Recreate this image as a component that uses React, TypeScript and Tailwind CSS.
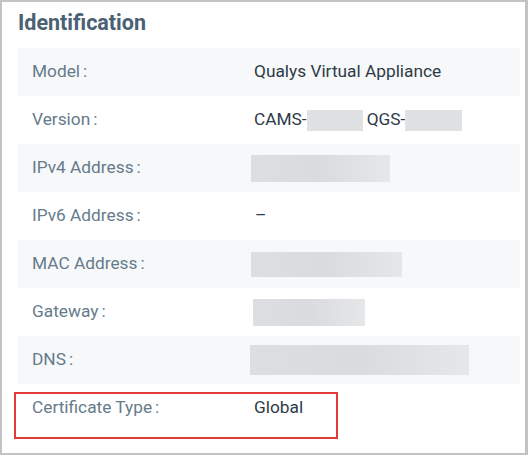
import React from "react";

type Row = { label: string; value: React.ReactNode };

const Blur = ({ w, h = 27 }: { w: number; h?: number }) => (
  <span
    className="inline-block bg-gradient-to-r from-[#dcdee1] via-[#d9dbde] to-[#e6e7e9] align-middle"
    style={{ width: w, height: h }}
  />
);

const rows: Row[] = [
  { label: "Model", value: "Qualys Virtual Appliance" },
  {
    label: "Version",
    value: (
      <span className="flex items-center">
        CAMS-
        <span className="inline-block w-[56px] h-[21px] bg-[#e0e1e3]" />
        <span className="ml-[4px]">QGS-</span>
        <span className="inline-block w-[57px] h-[21px] bg-[#e0e1e3]" />
      </span>
    ),
  },
  { label: "IPv4 Address", value: <span className="-ml-[3px] flex"><Blur w={139} /></span> },
  { label: "IPv6 Address", value: <span className="pl-[1px]">–</span> },
  { label: "MAC Address", value: <span className="-ml-[3px] flex"><Blur w={151} h={25} /></span> },
  { label: "Gateway", value: <span className="-ml-[1px] flex"><Blur w={112} /></span> },
  { label: "DNS", value: <span className="-ml-[4px] flex"><Blur w={219} h={30} /></span> },
  { label: "Certificate Type", value: "Global" },
];

export default function App() {
  return (
    <div
      className="relative w-[528px] h-[455px] bg-white border-2 border-r-[3px] border-[#c3c3c3] pl-[16px] pr-[5px]"
      style={{ fontFamily: "Roboto, 'Noto Sans', sans-serif" }}
    >
      <h2 className="h-[46px] pt-[7px] text-[21.5px] font-bold text-[#4a6173] leading-[28px]">
        Identification
      </h2>
      <div className="flex flex-col">
        {rows.map((r, i) => (
          <div
            key={r.label}
            className={[
              "grid grid-cols-[236px_1fr] items-center h-[48px] text-[17.3px]",
              i % 2 === 0 ? "bg-[#f7f8fa]" : "bg-white",
            ].join(" ")}
          >
            <span className="pl-[14px] text-[#667b8b]">
              {r.label}
              <span className="ml-[3px]">:</span>
            </span>
            <span className="text-[#2d3b48] flex items-center">{r.value}</span>
          </div>
        ))}
      </div>
      {/* highlight box */}
      <div className="absolute left-[12px] top-[390px] w-[324px] h-[47px] border-2 border-[#e53935]" />
    </div>
  );
}
